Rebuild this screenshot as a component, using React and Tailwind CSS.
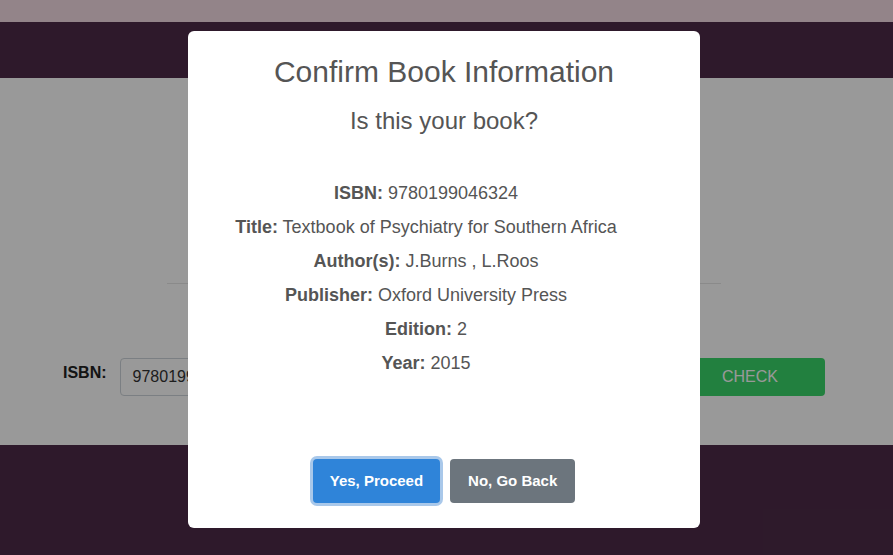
import React from "react";

const book = [
  ["ISBN:", "9780199046324"],
  ["Title:", "Textbook of Psychiatry for Southern Africa"],
  ["Author(s):", "J.Burns , L.Roos"],
  ["Publisher:", "Oxford University Press"],
  ["Edition:", "2"],
  ["Year:", "2015"],
];

export default function App() {
  return (
    <div className="relative h-[555px] w-[893px] overflow-hidden bg-white font-['Liberation_Sans',Arial,sans-serif]">
      {/* ===== PAGE ===== */}
      <div className="h-[22px] bg-[#f5dce4]" />
      <div className="h-[56px] bg-[#4d2b48]" />
      <main className="h-[367px] bg-white pt-[205px]">
        <div className="ml-[167px] w-[554px] border-t border-[#e6e6e6]" />
        <div className="mt-[74px] flex items-start pl-[63px] pr-[68px]">
          <label className="mt-[3px] text-[16px] font-bold text-[#222]">ISBN:</label>
          <div className="ml-[13px] flex h-[38px] w-[540px] items-center rounded-[4px] border border-[#ced4da] px-[12px] text-[16px] text-[#333]">
            9780199046324
          </div>
          <button className="ml-auto h-[38px] w-[150px] rounded-[4px] bg-[#3ad569] text-[16px] text-white">
            CHECK
          </button>
        </div>
      </main>
      <footer className="h-[110px] bg-[#4d2b48]" />

      {/* ===== MODAL ===== */}
      <div className="absolute inset-0 bg-black/40 pl-[188px] pt-[31px]">
        <div className="flex h-[497px] w-[512px] flex-col items-center rounded-[6px] bg-white text-[#555]">
          <h2 className="mt-[21px] text-[30px] leading-[40px]">Confirm Book Information</h2>
          <p className="mt-[14px] text-[24px] leading-[30px]">Is this your book?</p>
          <div className="mt-[40px] mr-[36px] flex flex-col items-center">
            {book.map(([k, v]) => (
              <div key={k} className="text-[18px] leading-[34px]">
                <span className="font-bold">{k}</span> {v}
              </div>
            ))}
          </div>
          <div className="mt-auto mb-[25px] flex gap-[10px]">
            <button className="h-[44px] rounded-[4px] bg-[#2f84d9] px-[17px] text-[15px] font-bold text-white ring-[3px] ring-[#a9c8ea]">
              Yes, Proceed
            </button>
            <button className="h-[44px] rounded-[4px] bg-[#6c757d] px-[18px] text-[15px] font-bold text-white">
              No, Go Back
            </button>
          </div>
        </div>
      </div>
    </div>
  );
}
